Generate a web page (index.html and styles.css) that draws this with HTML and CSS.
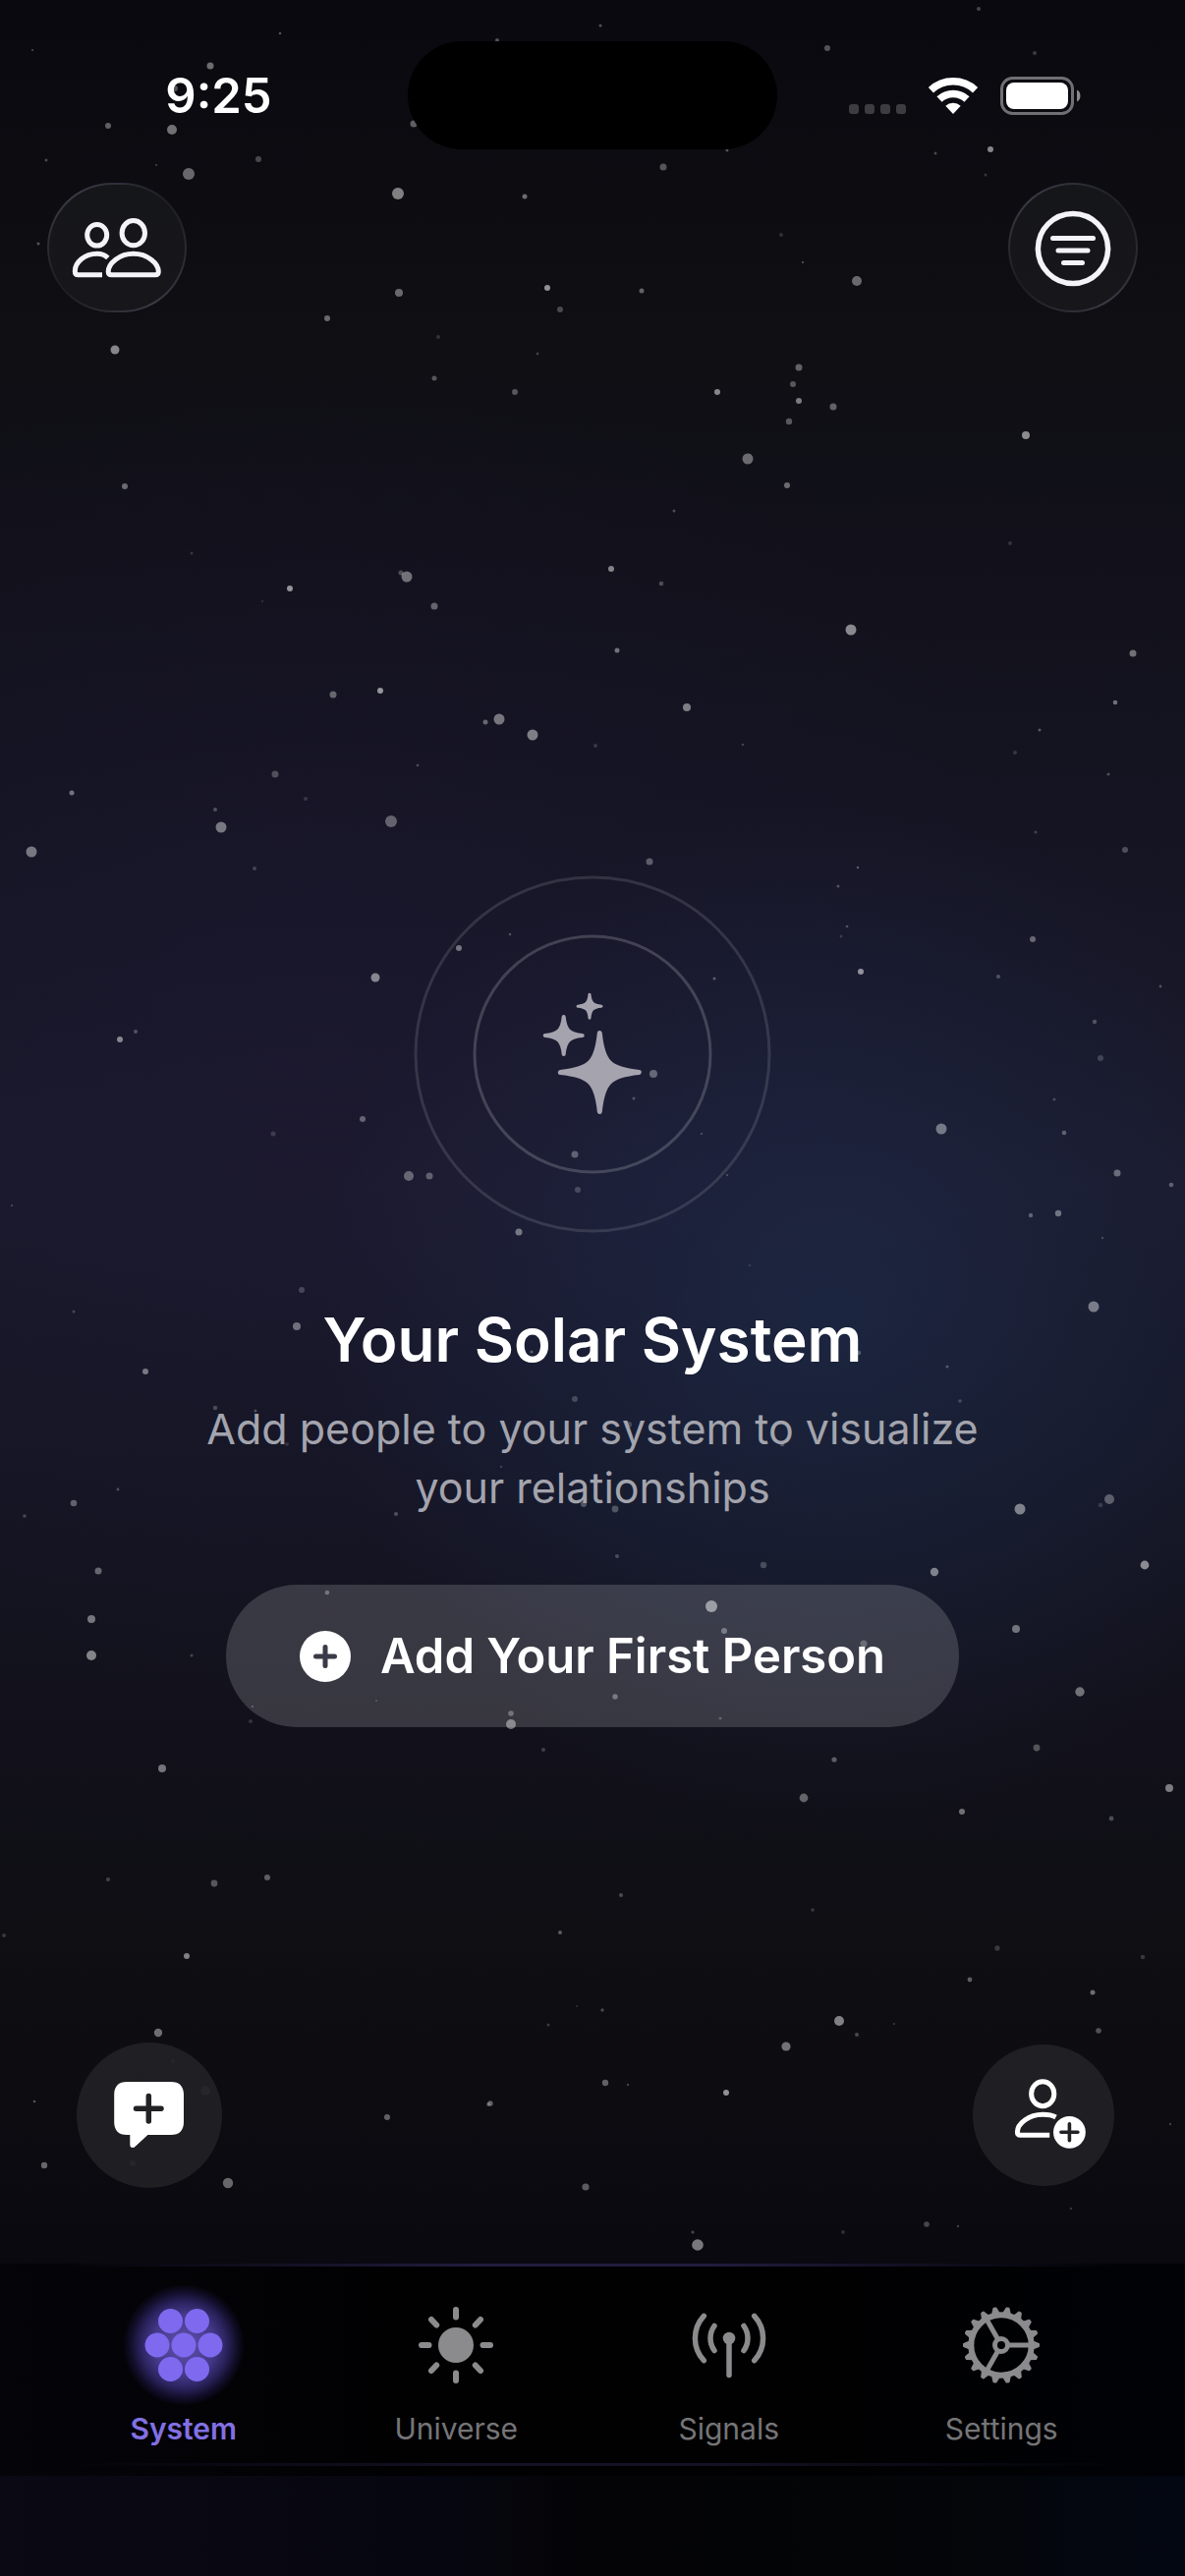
FILE: index.html
```html
<!DOCTYPE html>
<html lang="en">
    <head>
        <meta charset="UTF-8" />
        <meta name="viewport" content="width=device-width, initial-scale=1" />
        <title>Your Solar System</title>
        <link rel="stylesheet" href="styles.css">
    </head>
    <body>
        <svg class="stars" id="stars" viewBox="0 0 1206 2622" preserveAspectRatio="xMidYMin slice" aria-hidden="true"></svg>

        <div class="status-bar">
            <div class="status-side status-time">9:25</div>
            <div class="island"></div>
            <div class="status-side status-icons">
                <svg width="58" height="39" viewBox="0 0 58 39" fill="#3c3c41" aria-hidden="true">
                    <rect x="0" y="28" width="10" height="10" rx="3" />
                    <rect x="16" y="28" width="10" height="10" rx="3" />
                    <rect x="32" y="28" width="10" height="10" rx="3" />
                    <rect x="48" y="28" width="10" height="10" rx="3" />
                </svg>
                <svg width="52" height="39" viewBox="0 0 52 39" fill="none" stroke="#fff" stroke-width="7.6" aria-hidden="true">
                    <path d="M3.4 13.7A33.2 33.2 0 0 1 48.6 13.7" />
                    <path d="M12 23A20.5 20.5 0 0 1 40 23" />
                    <path d="M26 38L18.3 29.7A11.3 11.3 0 0 1 33.7 29.7Z" fill="#fff" stroke="none" />
                </svg>
                <svg width="82" height="39" viewBox="0 0 82 39" aria-hidden="true">
                    <rect x="1.5" y="1.5" width="72" height="36" rx="11" fill="none" stroke="#707074" stroke-width="3" />
                    <rect x="6" y="6" width="63" height="27" rx="8" fill="#fff" />
                    <path d="M78 13.5C82.6 15 82.6 24 78 25.5Z" fill="#8a8a8e" />
                </svg>
            </div>
        </div>

        <header class="toolbar">
            <button class="glass-btn glass-btn-wide" aria-label="People">
                <svg width="94" height="66" viewBox="0 0 94 66" fill="none" stroke="#f4f3f8" stroke-width="5" stroke-linejoin="round">
                    <ellipse cx="26.7" cy="20.3" rx="10" ry="10.8" />
                    <ellipse cx="63.8" cy="18.2" rx="11.7" ry="12.6" />
                    <path d="M37.8 43.4C35 40.6 31 39.2 26.7 39.2C14 39.2 4.3 48 4.3 57Q4.3 60.8 7.5 60.8H32" />
                    <path d="M63.8 39.2C78 39.2 89.3 49 89.3 57.5Q89.3 60.8 86 60.8H41.5Q38.2 60.8 38.2 57.5C38.2 49 49.5 39.2 63.8 39.2Z" />
                </svg>
            </button>
            <button class="glass-btn" aria-label="Filter">
                <svg width="80" height="80" viewBox="0 0 80 80" fill="none" stroke="#f4f3f8" stroke-width="5" stroke-linecap="round">
                    <circle cx="40" cy="41" r="35.6" stroke-width="5.5" />
                    <path d="M19.5 30.5H60.5M25 43H55M30.5 55.5H49.5" />
                </svg>
            </button>
        </header>

        <main class="empty-state">
            <svg class="orbit" width="364" height="364" viewBox="-182 -182 364 364" fill="none" aria-hidden="true">
                <circle r="180" stroke="#fff" stroke-opacity=".12" stroke-width="3" />
                <circle r="120" stroke="#fff" stroke-opacity=".18" stroke-width="3" />
                <g fill="#a4a3ae" stroke="#a4a3ae" stroke-linejoin="round">
                    <path stroke-width="5" d="M7.3 -21.5C10.3 8.5 17.3 15.5 47.3 18.5C17.3 21.5 10.3 28.5 7.3 58.5C4.3 28.5 -2.7 21.5 -32.7 18.5C-2.7 15.5 4.3 8.5 7.3 -21.5Z" />
                    <path stroke-width="4" d="M-29.3 -38C-28 -24.5 -23.8 -20.3 -10.3 -19C-23.8 -17.7 -28 -13.5 -29.3 0C-30.6 -13.5 -34.8 -17.7 -48.3 -19C-34.8 -20.3 -30.6 -24.5 -29.3 -38Z" />
                    <path stroke-width="3" d="M-3 -60.8C-2.3 -52.2 .4 -49.5 9 -48.8C.4 -48.1 -2.3 -45.4 -3 -36.8C-3.7 -45.4 -6.4 -48.1 -15 -48.8C-6.4 -49.5 -3.7 -52.2 -3 -60.8Z" />
                </g>
            </svg>
            <h1>Your Solar System</h1>
            <p>Add people to your system to visualize your relationships</p>
            <button class="primary-btn">
                <svg width="52" height="52" viewBox="0 0 52 52" aria-hidden="true">
                    <circle cx="26" cy="26" r="26" fill="#fff" />
                    <path d="M26 16.5V35.5M16.5 26H35.5" stroke="#3a3b48" stroke-width="5" stroke-linecap="round" />
                </svg>
                Add Your First Person
            </button>
        </main>

        <div class="fab-row">
            <button class="fab fab-large" aria-label="New message">
                <svg width="90" height="90" viewBox="0 0 90 90">
                    <path fill="#fff" d="M22.2 11H67C75.5 11 80 15.5 80 24V52C80 60.5 75.5 65 67 65H43.4L31 76.5Q29.5 78 28 78Q25.3 78 25.3 75V65H22.2C13.7 65 9.2 60.5 9.2 52V24C9.2 15.5 13.7 11 22.2 11Z" />
                    <path d="M44.3 25.5V51M31.5 38.2H57" stroke="#222225" stroke-width="5.5" stroke-linecap="round" />
                </svg>
            </button>
            <button class="fab" aria-label="Add person">
                <svg width="90" height="80" viewBox="0 0 90 80" fill="none" stroke="#fff" stroke-width="5" stroke-linejoin="round">
                    <ellipse cx="44.2" cy="18.2" rx="11.6" ry="12.5" />
                    <path d="M57.5 42C54 40 49 39.3 44.2 39.3C30 39.3 18.4 48.5 18.4 57Q18.4 60.3 21.5 60.3H51.2" />
                    <circle cx="71.4" cy="57.3" r="16.4" fill="#fff" stroke="none" />
                    <path d="M71.4 48.8V65.8M62.9 57.3H79.9" stroke="#222225" stroke-width="3.6" stroke-linecap="round" />
                </svg>
            </button>
        </div>

        <nav class="tab-bar">
            <a href="#system" class="tab active">
                <svg width="124" height="124" viewBox="-62 -62 124 124" fill="#7f69ef" aria-hidden="true">
                    <circle cx="-13.5" cy="-24.5" r="12.5" />
                    <circle cx="13.5" cy="-24.5" r="12.5" />
                    <circle cx="-27" cy="0" r="12.5" />
                    <circle cx="0" cy="0" r="12.5" />
                    <circle cx="27" cy="0" r="12.5" />
                    <circle cx="-13.5" cy="24.5" r="12.5" />
                    <circle cx="13.5" cy="24.5" r="12.5" />
                </svg>
                System
            </a>
            <a href="#universe" class="tab">
                <svg width="124" height="124" viewBox="-62 -62 124 124" stroke="#8b8b8d" stroke-width="6" stroke-linecap="round" aria-hidden="true">
                    <circle r="18" fill="#8b8b8d" stroke="none" />
                    <path d="M0 -36V-28.5M0 36V28.5M-35 0H-27.5M35 0H27.5M-25 -26L-19.8 -20.5M25 -26L19.8 -20.5M-25 26L-19.8 20.5M25 26L19.8 20.5" />
                </svg>
                Universe
            </a>
            <a href="#signals" class="tab">
                <svg width="124" height="124" viewBox="-62 -62 124 124" fill="none" stroke="#8b8b8d" stroke-width="5.5" stroke-linecap="round" aria-hidden="true">
                    <circle cy="-7" r="6.3" fill="#8b8b8d" stroke="none" />
                    <path d="M0 -7V30.5" />
                    <path d="M-15 -19.5A21.5 21.5 0 0 0 -15 5.5M15 -19.5A21.5 21.5 0 0 1 15 5.5" />
                    <path d="M-25.7 -29.7A33.4 33.4 0 0 0 -25.7 15.7M25.7 -29.7A33.4 33.4 0 0 1 25.7 15.7" />
                </svg>
                Signals
            </a>
            <a href="#settings" class="tab">
                <svg width="124" height="124" viewBox="-62 -62 124 124" fill="none" stroke="#8b8b8d" aria-hidden="true">
                    <g id="teeth" fill="#8b8b8d" stroke-width="2" stroke-linejoin="round">
                        <path d="M32 -3.5L38 -1V1L32 3.5Z" />
                        <path d="M32 -3.5L38 -1V1L32 3.5Z" transform="rotate(20)" />
                        <path d="M32 -3.5L38 -1V1L32 3.5Z" transform="rotate(40)" />
                    </g>
                    <use href="#teeth" transform="rotate(60)" />
                    <use href="#teeth" transform="rotate(120)" />
                    <use href="#teeth" transform="rotate(180)" />
                    <use href="#teeth" transform="rotate(240)" />
                    <use href="#teeth" transform="rotate(300)" />
                    <circle r="30.7" stroke-width="6" />
                    <circle r="6.5" stroke-width="5" />
                    <path d="M8 0H29M-4 -7L-14.5 -25.5M-4 7L-14.5 25.5" stroke-width="5" />
                </svg>
                Settings
            </a>
        </nav>
        <div class="safe-area"></div>

        <script src="stars.js"></script>
    </body>
</html>
```
FILE: styles.css
```css
* {
    box-sizing: border-box;
}
body {
    margin: 0;
    min-height: 100vh;
    position: relative;
    display: flex;
    flex-direction: column;
    overflow-x: hidden;
    font-family: Inter, "Liberation Sans", sans-serif;
    color: #fff;
    background:
        radial-gradient(circle 520px at 70% 51%, rgba(34, 56, 96, 0.42), rgba(34, 56, 96, 0)),
        radial-gradient(circle 700px at 28% 40%, rgba(40, 28, 70, 0.2), rgba(40, 28, 70, 0)),
        linear-gradient(#09090f 0%, #0f0f14 14%, #12111b 22%, #151524 34%, #1a192b 46%, #151625 56%, #12111b 67%, #0e0e12 77%, #0a0910 88%);
}
button {
    border: none;
    padding: 0;
    font: inherit;
    color: inherit;
    cursor: pointer;
    display: flex;
    align-items: center;
    justify-content: center;
}
svg {
    display: block;
    flex-shrink: 0;
}
.stars {
    position: absolute;
    inset: 0;
    width: 100%;
    height: 100%;
    z-index: -1;
    fill: #fff;
}
.status-bar {
    display: grid;
    grid-template-columns: 1fr 376px 1fr;
    align-items: center;
    padding-top: 42px;
}
.island {
    height: 110px;
    border-radius: 55px;
    background: #000;
}
.status-side {
    display: flex;
    align-items: center;
    justify-content: center;
}
.status-time {
    padding-left: 30px;
    font-size: 49px;
    font-weight: 600;
}
.status-icons {
    gap: 22px;
    padding-right: 34px;
}
.toolbar {
    display: flex;
    justify-content: space-between;
    padding: 34px 48px 0;
}
.glass-btn {
    width: 132px;
    height: 132px;
    border-radius: 66px;
    border: 2px solid transparent;
    background:
        linear-gradient(#15161a, #17161b) padding-box,
        conic-gradient(#2f2e39, #1e1e24 50deg, #2c2c34 100deg, #3b3a45 150deg, #2c2c34 190deg, #1c1c21 235deg, #302f38 280deg, #3b3a45 320deg, #2f2e39) border-box;
}
.glass-btn-wide {
    width: 142px;
}
.empty-state {
    flex: 1;
    display: flex;
    flex-direction: column;
    align-items: center;
    justify-content: center;
    padding: 252px 48px 0;
    text-align: center;
}
.empty-state h1 {
    margin: 69px 0 20px;
    font-size: 62px;
    line-height: 80px;
    font-weight: 600;
}
.empty-state p {
    margin: 0 0 69px;
    max-width: 820px;
    font-size: 43px;
    line-height: 60px;
    color: #a3a4ad;
}
.primary-btn {
    height: 145px;
    padding: 0 75px;
    gap: 30px;
    border-radius: 72px;
    background: rgba(255, 255, 255, 0.16);
    font-size: 49px;
    font-weight: 600;
}
.fab-row {
    display: flex;
    justify-content: space-between;
    align-items: center;
    padding: 0 72px 77px 78px;
}
.fab {
    width: 144px;
    height: 144px;
    border-radius: 50%;
    background: rgba(34, 34, 37, 0.92);
}
.fab-large {
    width: 148px;
    height: 148px;
}
.tab-bar {
    position: relative;
    display: grid;
    grid-template-columns: repeat(4, 1fr);
    height: 216px;
    padding: 21px 48px 0;
    background: linear-gradient(90deg, #050409, #010102 35%, #010102 70%, #010206);
}
.tab-bar::before,
.tab-bar::after {
    content: "";
    position: absolute;
    left: 0;
    right: 0;
    height: 3px;
    background: linear-gradient(90deg, transparent 5%, #211c3d 40%, #211c3d 60%, transparent 95%);
}
.tab-bar::before {
    top: 0;
}
.tab-bar::after {
    bottom: 10px;
    opacity: 0.6;
}
.tab {
    display: flex;
    flex-direction: column;
    align-items: center;
    gap: 5px;
    font-size: 30px;
    line-height: 36px;
    color: #757577;
    text-decoration: none;
}
.tab.active {
    color: #8270e4;
    font-weight: 600;
}
.tab.active svg {
    background: radial-gradient(circle closest-side, #55479f 20%, #45398a 50%, #2c2460 70%, #120e2a 87%, transparent);
}
.safe-area {
    height: 102px;
    background: linear-gradient(90deg, #0b0914, #060610 38%, #040406 50%, #040507 75%, #030712);
}
```
FILE: stars.js
```js
// x, y, radius, opacity
const stars = [
    [33, 51, 1, .3], [285, 34, 1.3, .3], [214, 67, 3.5, .4], [506, 41, 2, .3], [110, 128, 3, .35],
    [175, 132, 5, .42], [178, 90, 3, .3], [47, 163, 1.5, .25], [159, 168, 1, .25], [263, 162, 3, .25],
    [192, 177, 6, .38], [421, 126, 3.5, .35], [405, 197, 6, .48], [534, 200, 2.5, .4], [39, 248, 1.5, .3],
    [557, 293, 3, .55], [406, 298, 4, .38], [570, 315, 3, .25], [333, 324, 3, .38], [446, 343, 2, .15],
    [547, 360, 1.5, .2], [117, 356, 4.5, .5], [442, 385, 2.5, .3], [524, 399, 3, .3],
    [611, 26, 1.5, .3], [996, 9, 2, .25], [842, 49, 3, .3], [1053, 54, 2, .2], [740, 153, 1.5, .3],
    [675, 170, 3.5, .3], [952, 156, 1.5, .25], [1008, 152, 3, .5], [1003, 178, 1.5, .18], [795, 239, 2, .15],
    [817, 267, 1, .35], [872, 286, 5, .38], [653, 296, 2.5, .35], [813, 374, 3.5, .35], [807, 391, 3, .3],
    [730, 399, 3, .5], [127, 495, 3, .38], [195, 563, 1.5, .15], [267, 612, 1, .15], [295, 599, 3, .55],
    [408, 583, 2.5, .25], [414, 587, 5.5, .4], [442, 617, 3.5, .35], [387, 703, 3, .55], [339, 707, 3.5, .35],
    [494, 735, 2.5, .35], [508, 732, 5.5, .42], [542, 748, 5.5, .45], [425, 779, 1.3, .25], [280, 788, 3.5, .25],
    [311, 813, 2, .15], [73, 807, 2.5, .4], [219, 824, 2, .25], [225, 842, 5.5, .42], [398, 836, 6, .33],
    [32, 867, 5.5, .42], [259, 884, 2, .2], [467, 965, 3, .4], [519, 951, 1.3, .25], [382, 995, 4.5, .48],
    [122, 1058, 3, .48], [138, 1050, 2, .25], [369, 1139, 3, .33], [278, 1154, 2.5, .15], [585, 1175, 3.5, .3],
    [416, 1197, 5, .33], [437, 1197, 3.5, .3], [813, 408, 3, .45], [803, 429, 3.2, .3], [848, 414, 3.5, .35],
    [761, 467, 5.5, .38], [1044, 443, 4, .52], [801, 494, 3, .38], [686, 520, 1.5, .25], [1028, 553, 2, .15],
    [622, 579, 3, .48], [673, 594, 2.3, .25], [866, 641, 5.5, .5], [628, 662, 2.5, .4], [1153, 665, 3.5, .4],
    [699, 720, 4, .45], [1135, 715, 2.3, .4], [606, 759, 2, .15], [756, 758, 1.3, .2], [1058, 743, 1.5, .3],
    [1033, 766, 2, .15], [1128, 788, 1.5, .25], [1054, 847, 1.5, .2], [1145, 865, 3, .25], [661, 877, 3.5, .3],
    [873, 883, 1.2, .3], [853, 902, 1.5, .25], [862, 943, 1.3, .25], [856, 953, 1.5, .15], [876, 989, 3, .52],
    [1051, 956, 3, .35], [727, 996, 1.5, .3], [1016, 994, 2, .25], [1181, 1004, 1.4, .25], [1114, 1040, 2.2, .25],
    [1120, 1077, 3, .18], [665, 1093, 4, .33], [645, 1118, 1.5, .25], [1073, 1119, 1.6, .2], [958, 1149, 5.5, .4],
    [1083, 1153, 2.3, .3], [714, 1154, 1.3, .18], [1137, 1194, 3.5, .35], [740, 1196, 1, .25],
    [12, 1227, 1, .25], [588, 1211, 3, .2], [528, 1254, 3.5, .4], [307, 1313, 3, .2], [302, 1350, 4, .38],
    [75, 1335, 1.5, .2], [148, 1396, 3, .42], [219, 1433, 2.3, .22], [260, 1436, 1.5, .25], [292, 1470, 2, .12],
    [541, 1376, 1.5, .3], [585, 1424, 3, .2], [510, 1493, 1, .25], [120, 1516, 1.4, .25], [75, 1530, 3.3, .33],
    [25, 1543, 1.8, .22], [403, 1541, 2, .25], [594, 1531, 3, .25], [100, 1599, 3.5, .35], [93, 1648, 4, .42],
    [93, 1685, 5, .48], [195, 1685, 1.5, .22], [333, 1621, 2.3, .3], [257, 1737, 1, .3], [383, 1731, 1, .2],
    [255, 1752, 2, .15], [520, 1744, 2.8, .3], [520, 1755, 5, .42], [165, 1800, 4, .42], [553, 1781, 2, .2],
    [110, 1913, 2, .22], [218, 1917, 3.4, .3], [272, 1911, 3, .33], [4, 1970, 2, .18], [570, 1967, 2, .32],
    [190, 1991, 3, .48], [161, 2069, 4.2, .4], [587, 2042, 1, .15], [558, 2061, 1.5, .2],
    [1192, 1206, 2.3, .3], [1049, 1237, 2.2, .3], [1077, 1235, 3.2, .38], [1122, 1260, 1.2, .2], [763, 1288, 1.3, .12],
    [1113, 1330, 5.5, .42], [874, 1377, 2.3, .25], [964, 1391, 1.6, .25], [977, 1426, 1.8, .2], [640, 1450, 3, .2],
    [796, 1470, 2.3, .25], [626, 1536, 3.4, .25], [1038, 1536, 5.5, .45], [1129, 1526, 5, .3], [1120, 1532, 2.3, .15],
    [628, 1584, 2, .22], [777, 1593, 3.2, .22], [951, 1600, 4.2, .45], [1165, 1593, 4.4, .5], [724, 1635, 6, .5],
    [737, 1660, 3, .33], [879, 1673, 3.5, .25], [1034, 1658, 4, .4], [1099, 1722, 4.7, .4], [626, 1727, 2.7, .33],
    [733, 1749, 1.5, .22], [849, 1791, 2.6, .32], [1055, 1779, 3.4, .28], [818, 1830, 4.4, .35], [1190, 1820, 4, .45],
    [979, 1844, 3, .4], [1131, 1851, 2.4, .25], [632, 1929, 2, .25], [827, 1944, 1.8, .18], [1015, 1983, 2.7, .18],
    [1163, 1992, 2.2, .18], [987, 2015, 2.4, .33], [1112, 2028, 2.5, .4], [613, 2046, 1.7, .25], [854, 2057, 5, .48],
    [872, 2071, 2, .25], [910, 2060, 1, .2], [800, 2083, 4.6, .42], [1118, 2067, 2.8, .28],
    [176, 2098, 2, .3], [209, 2128, 4.5, .4], [35, 2139, 1.3, .3], [394, 2155, 3, .35], [499, 2141, 2.7, .35],
    [497, 2142, 2, .25], [45, 2204, 3.2, .38], [135, 2202, 3, .35], [232, 2222, 5.2, .38], [596, 2226, 3.6, .33],
    [616, 2120, 3.2, .35], [639, 2122, 1.2, .22], [739, 2130, 3, .55], [1191, 2162, 1.2, .22], [1090, 2248, 1.2, .18],
    [943, 2264, 2.8, .25], [975, 2266, 1.2, .22], [705, 2272, 1.6, .25], [710, 2285, 5.8, .45], [858, 2272, 2, .15]
];

const sky = document.getElementById("stars");
stars.forEach(([x, y, r, opacity]) => {
    const star = document.createElementNS("http://www.w3.org/2000/svg", "circle");
    star.setAttribute("cx", x);
    star.setAttribute("cy", y);
    star.setAttribute("r", r);
    star.setAttribute("opacity", opacity);
    sky.appendChild(star);
});
```
